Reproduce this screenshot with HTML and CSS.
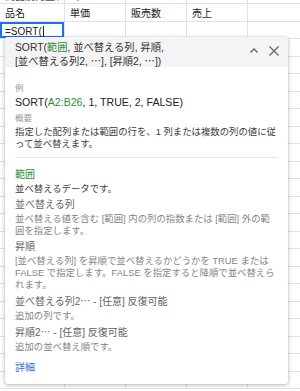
FILE: index.html
```html
<!DOCTYPE html>
<html lang="ja">
<head>
<meta charset="utf-8">
<link rel="stylesheet" href="styles.css">
</head>
<body>
<div class="sheet">
  <div class="cell title-cell">商品別売上データ</div><div class="cell"></div><div class="cell"></div><div class="cell"></div><div class="cell"></div>
  <div class="cell">品名</div><div class="cell">単価</div><div class="cell">販売数</div><div class="cell">売上</div><div class="cell"></div>
  <div class="cell active">=SORT(<span class="cursor"></span></div><div class="cell"></div><div class="cell"></div><div class="cell"></div><div class="cell"></div>
  <div class="cell"></div><div class="cell"></div><div class="cell"></div><div class="cell"></div><div class="cell"></div>
  <div class="cell"></div><div class="cell"></div><div class="cell"></div><div class="cell"></div><div class="cell"></div>
  <div class="cell"></div><div class="cell"></div><div class="cell"></div><div class="cell"></div><div class="cell"></div>
  <div class="cell"></div><div class="cell"></div><div class="cell"></div><div class="cell"></div><div class="cell"></div>
  <div class="cell"></div><div class="cell"></div><div class="cell"></div><div class="cell"></div><div class="cell"></div>
  <div class="cell"></div><div class="cell"></div><div class="cell"></div><div class="cell"></div><div class="cell"></div>
  <div class="cell"></div><div class="cell"></div><div class="cell"></div><div class="cell"></div><div class="cell"></div>
  <div class="cell"></div><div class="cell"></div><div class="cell"></div><div class="cell"></div><div class="cell"></div>
  <div class="cell"></div><div class="cell"></div><div class="cell"></div><div class="cell"></div><div class="cell"></div>
  <div class="cell"></div><div class="cell"></div><div class="cell"></div><div class="cell"></div><div class="cell"></div>
  <div class="cell"></div><div class="cell"></div><div class="cell"></div><div class="cell"></div><div class="cell"></div>
  <div class="cell"></div><div class="cell"></div><div class="cell"></div><div class="cell"></div><div class="cell"></div>
  <div class="cell"></div><div class="cell"></div><div class="cell"></div><div class="cell"></div><div class="cell"></div>
  <div class="cell"></div><div class="cell"></div><div class="cell"></div><div class="cell"></div><div class="cell"></div>
  <div class="cell"></div><div class="cell"></div><div class="cell"></div><div class="cell"></div><div class="cell"></div>
  <div class="cell"></div><div class="cell"></div><div class="cell"></div><div class="cell"></div><div class="cell"></div>
  <div class="cell"></div><div class="cell"></div><div class="cell"></div><div class="cell"></div><div class="cell"></div>
  <div class="cell"></div><div class="cell"></div><div class="cell"></div><div class="cell"></div><div class="cell"></div>
  <div class="cell"></div><div class="cell"></div><div class="cell"></div><div class="cell"></div><div class="cell"></div>
  <div class="cell"></div><div class="cell"></div><div class="cell"></div><div class="cell"></div><div class="cell"></div>
</div>

<div class="popup">
  <div class="popup-head">
    <div class="signature">SORT(<span class="green">範囲</span>, 並べ替える列, 昇順,<br>[並べ替える列2, <span class="ell">…</span>], [昇順2, <span class="ell">…</span>])</div>
    <div class="head-icons">
      <svg class="icon" width="12" height="12" viewBox="0 0 12 12"><polyline points="2.5,7.5 6,4 9.5,7.5" fill="none" stroke="#5f6368" stroke-width="1.3"/></svg>
      <svg class="icon" width="12" height="12" viewBox="0 0 12 12"><path d="M1.5 1.5 L10.5 10.5 M10.5 1.5 L1.5 10.5" fill="none" stroke="#5f6368" stroke-width="1.3"/></svg>
    </div>
  </div>
  <div class="popup-body">
    <div class="label">例</div>
    <div class="example">SORT(<span class="green">A2:B26</span>, 1, TRUE, 2, FALSE)</div>
    <div class="label label-gap">概要</div>
    <div class="summary">指定した配列または範囲の行を、1 列または複数の列の値に従って並べ替えます。</div>
    <div class="divider"></div>
    <div class="param">
      <div class="param-name param-active">範囲</div>
      <div class="param-desc active-desc">並べ替えるデータです。</div>
    </div>
    <div class="param">
      <div class="param-name">並べ替える列</div>
      <div class="param-desc">並べ替える値を含む [範囲] 内の列の指数または [範囲] 外の範囲を指定します。</div>
    </div>
    <div class="param">
      <div class="param-name">昇順</div>
      <div class="param-desc">[並べ替える列] を昇順で並べ替えるかどうかを TRUE または FALSE で指定します。FALSE を指定すると降順で並べ替えられます。</div>
    </div>
    <div class="param">
      <div class="param-name">並べ替える列2<span class="ell">…</span> - [任意] 反復可能</div>
      <div class="param-desc">追加の列です。</div>
    </div>
    <div class="param">
      <div class="param-name">昇順2<span class="ell">…</span> - [任意] 反復可能</div>
      <div class="param-desc">追加の並べ替え順です。</div>
    </div>
    <div class="more">詳細</div>
  </div>
</div>
</body>
</html>
```

FILE: styles.css
```css
html, body {
  margin: 0;
  padding: 0;
  background: #ffffff;
  overflow: hidden;
  width: 300px;
  height: 391px;
}

body {
  font-family: "Liberation Sans", "Noto Sans CJK JP", sans-serif;
  color: #222222;
}

.sheet {
  display: grid;
  grid-template-columns: 65px 61px 61px 61px 61px;
  grid-auto-rows: 17.5px;
  margin-top: -13.5px;
}

.cell {
  box-sizing: border-box;
  border-right: 1px solid #e2e2e2;
  border-bottom: 1px solid #e2e2e2;
  font-size: 10px;
  line-height: 17px;
  padding: 1px 0 0 5px;
  white-space: nowrap;
  color: #222222;
}

.title-cell {
  color: #555555;
}

.active {
  box-shadow: inset 0 0 0 2px #1a73e8;
  padding-left: 5px;
  font-size: 10px;
}

.cursor {
  display: inline-block;
  width: 1px;
  height: 11px;
  background: #222222;
  vertical-align: -2px;
  margin-left: 1px;
}

.popup {
  position: absolute;
  left: 5px;
  top: 37px;
  width: 283px;
  box-sizing: border-box;
  background: #ffffff;
  border-radius: 3px;
  box-shadow: 0 1px 4px rgba(0, 0, 0, 0.3), 0 0 1px rgba(0, 0, 0, 0.15);
  overflow: hidden;
}

.popup-head {
  background: #f4f4f4;
  display: flex;
  justify-content: space-between;
  align-items: flex-start;
  padding: 5px 8px 0 10px;
  height: 30px;
  box-sizing: border-box;
}

.signature {
  font-size: 10.3px;
  line-height: 12.5px;
  color: #333333;
}

.ell {
  font-family: "Noto Sans CJK JP", sans-serif;
}

.head-icons {
  display: flex;
  gap: 8px;
  padding-top: 3px;
}

.icon {
  display: block;
}

.green {
  color: #2e8b3a;
}

.popup-body {
  padding: 16px 10px 10px 10px;
}

.label {
  font-size: 8.5px;
  line-height: 11px;
  color: #9a9a9a;
}

.label-gap {
  margin-top: 4px;
}

.example {
  font-size: 10.6px;
  line-height: 13px;
  margin-top: 1.5px;
  color: #222222;
}

.summary {
  font-size: 9.4px;
  line-height: 12px;
  color: #3c3c3c;
  margin-top: 2px;
}

.divider {
  height: 1px;
  background: #e4e4e4;
  margin: 7.5px 0 11px 0;
}

.param {
  margin-bottom: 4.5px;
}

.param-name {
  font-size: 10px;
  line-height: 12px;
  color: #5f6368;
}

.param-name.param-active {
  color: #2e8b3a;
}

.param-desc {
  font-size: 9.4px;
  line-height: 12px;
  margin-top: 1.5px;
  color: #80868b;
}

.param-desc.active-desc {
  color: #3c4043;
}

.more {
  margin-top: 9px;
  font-size: 10px;
  line-height: 12px;
  color: #3a6bcc;
}
```
